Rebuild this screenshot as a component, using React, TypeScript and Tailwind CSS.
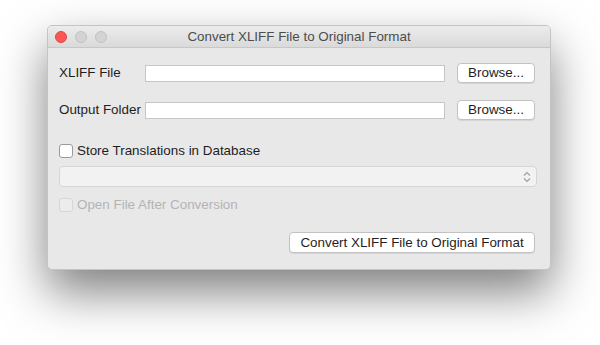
import React from "react";

const font = { fontFamily: '"Liberation Sans", Arial, sans-serif' };

function Checkbox({ label, disabled }: { label: string; disabled?: boolean }) {
  return (
    <div className="flex items-center gap-[4px]">
      <div
        className={
          "w-[14px] h-[14px] rounded-[3px] border " +
          (disabled ? "border-[#d6d6d6] bg-[#ececec]" : "border-[#9c9c9c] bg-white")
        }
      />
      <span className={"text-[13.4px] leading-none " + (disabled ? "text-[#b4b4b4]" : "text-[#1e1e1e]")}>{label}</span>
    </div>
  );
}

function FileRow({ label }: { label: string }) {
  return (
    <div className="flex items-center">
      <span className="w-[86px] text-[13.4px] text-[#1e1e1e] leading-none">{label}</span>
      <div className="w-[300px] h-[17px] bg-white border border-[#c6c6c6]" />
      <button className="ml-[12px] w-[78px] h-[20px] rounded-[4px] bg-white border border-[#c2c2c2] shadow-[0_1px_0_rgba(0,0,0,0.08)] text-[13.4px] text-[#1e1e1e] leading-none">
        Browse...
      </button>
    </div>
  );
}

export default function App() {
  return (
    <div className="w-[600px] h-[345px] bg-white pt-[25px] pl-[47px]" style={font}>
      <div className="w-[504px] h-[245px] rounded-[5px] bg-[#e8e8e8] border border-[#c4c4c4] shadow-[0_22px_48px_rgba(0,0,0,0.5)] flex flex-col overflow-hidden">
        <div className="h-[22px] flex items-center border-b border-[#c7c7c7] bg-gradient-to-b from-[#ececec] to-[#dadada]">
          <div className="w-[64px] flex items-center gap-[8px] pl-[7px]">
            <div className="w-[12px] h-[12px] rounded-full bg-[#fc5753] border border-[#df4744]" />
            <div className="w-[12px] h-[12px] rounded-full bg-[#d3d3d3] border border-[#c2c2c2]" />
            <div className="w-[12px] h-[12px] rounded-full bg-[#d3d3d3] border border-[#c2c2c2]" />
          </div>
          <div className="flex-1 text-center text-[13.4px] text-[#4d4d4d] leading-none">
            Convert XLIFF File to Original Format
          </div>
          <div className="w-[64px]" />
        </div>
        <div className="flex flex-col pl-[11px] pr-[15px] pt-[15px]">
          <FileRow label="XLIFF File" />
          <div className="mt-[17px]">
            <FileRow label="Output Folder" />
          </div>
          <div className="mt-[24px]">
            <Checkbox label="Store Translations in Database" />
          </div>
          <div className="mt-[8px] mr-[-2px] h-[21px] rounded-[4px] border border-[#d6d6d6] bg-[#f2f2f2] flex items-center justify-end pr-[4px]">
            <svg width="10" height="14" viewBox="0 0 10 14" fill="none" stroke="#a0a0a0" strokeWidth="1.2">
              <path d="M2 5.5 L5 2.5 L8 5.5" />
              <path d="M2 8.5 L5 11.5 L8 8.5" />
            </svg>
          </div>
          <div className="mt-[11px]">
            <Checkbox label="Open File After Conversion" disabled />
          </div>
          <div className="mt-[20px] flex justify-end">
            <button className="w-[246px] h-[21px] rounded-[4px] bg-white border border-[#c2c2c2] shadow-[0_1px_0_rgba(0,0,0,0.08)] text-[13.4px] text-[#1e1e1e] leading-none">
              Convert XLIFF File to Original Format
            </button>
          </div>
        </div>
      </div>
    </div>
  );
}
